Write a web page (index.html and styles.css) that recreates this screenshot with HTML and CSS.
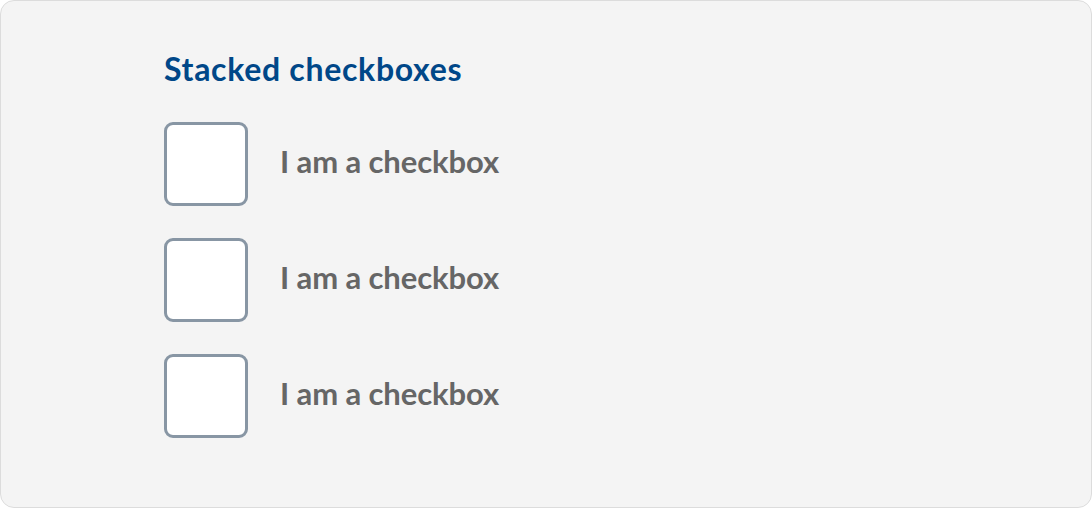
FILE: index.html
```html
<!DOCTYPE html>
<html>
<head>
<meta charset="utf-8">
<link rel="stylesheet" href="styles.css">
</head>
<body>
<div class="card">
  <div class="group" role="group" aria-labelledby="grp-title">
    <div class="title" id="grp-title">Stacked checkboxes</div>
    <label class="row"><span class="box"></span><span class="text">I am a checkbox</span></label>
    <label class="row"><span class="box"></span><span class="text">I am a checkbox</span></label>
    <label class="row"><span class="box"></span><span class="text">I am a checkbox</span></label>
  </div>
</div>
</body>
</html>
```
FILE: styles.css
```css
html, body { margin: 0; padding: 0; }
body { width: 1092px; height: 508px; font-family: "Lato", "Open Sans", sans-serif; }
.card {
  box-sizing: border-box;
  width: 1092px;
  height: 508px;
  background: #f4f4f4;
  border: 1px solid #dcdcdc;
  border-radius: 14px;
  padding: 47px 0 0 163px;
}
.group { display: flex; flex-direction: column; gap: 32px; }
.title {
  font-size: 32px;
  font-weight: 700;
  color: #004788;
  line-height: 42px;
  letter-spacing: 0.7px;
}
.row { display: flex; align-items: center; gap: 32px; }
.box {
  box-sizing: border-box;
  width: 84px;
  height: 84px;
  background: #fff;
  border: 3px solid #8896a4;
  border-radius: 9px;
}
.text {
  font-size: 31px;
  font-weight: 700;
  color: #666;
  letter-spacing: -0.1px;
  padding-bottom: 7px;
}
```
